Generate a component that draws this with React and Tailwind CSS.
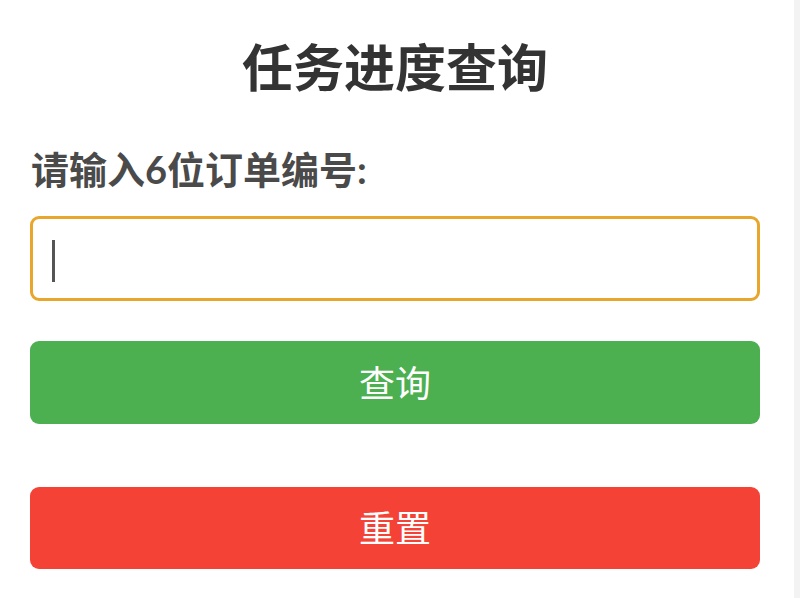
import { useState } from 'react'

function App() {
    const [orderNo, setOrderNo] = useState('')

    return (
        <div className="min-h-[598px] w-[800px] bg-white border-r-[6px] border-[#f3f3f3]" style={{ fontFamily: "Lato, 'Noto Sans CJK SC', sans-serif" }}>
            <div className="px-[30px] pt-[38px]">
                <h1 className="text-center text-[51px] leading-[60px] font-bold text-[#333333] pr-[4px]">任务进度查询</h1>

                <label className="block mt-[49px] text-[38px] leading-[44px] font-bold text-[#4a4a4a] pl-[1px]">请输入6位订单编号:</label>

                <div className="relative mt-[25px] w-[730px] h-[85px] rounded-[9px] border-[3px] border-[#e8a62c] bg-white">
                    <input
                        value={orderNo}
                        onChange={(e) => setOrderNo(e.target.value)}
                        maxLength={6}
                        className="w-full h-full px-[20px] bg-transparent outline-none caret-transparent text-[30px] text-[#333]"
                    />
                    <span className="absolute left-[19px] top-[21px] w-[3px] h-[42px] bg-[#555] pointer-events-none" />
                </div>

                <button className="mt-[40px] w-[730px] h-[83px] rounded-[9px] bg-[#4caf50] text-white text-[36px] leading-none">
                    查询
                </button>

                <button className="mt-[63px] w-[730px] h-[82px] rounded-[9px] bg-[#f44336] text-white text-[36px] leading-none" onClick={() => setOrderNo('')}>
                    重置
                </button>
            </div>
        </div>
    )
}

export default App
